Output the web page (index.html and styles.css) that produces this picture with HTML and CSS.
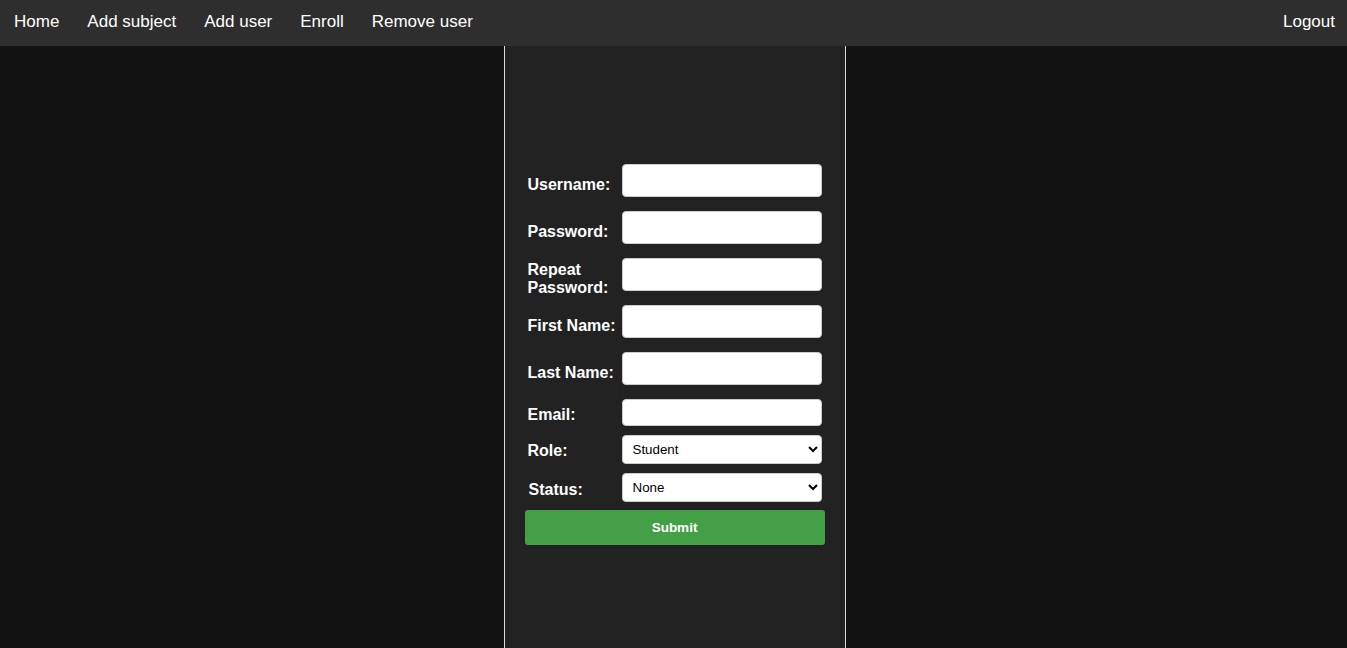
FILE: index.html
```html
<!DOCTYPE html>
<html>
<head>
<meta charset="utf-8">
<link rel="stylesheet" href="styles.css">
</head>
<body>
<nav class="topnav">
  <div class="nav-left">
    <a href="#">Home</a>
    <a href="#">Add subject</a>
    <a href="#">Add user</a>
    <a href="#">Enroll</a>
    <a href="#">Remove user</a>
  </div>
  <a href="#">Logout</a>
</nav>
<main class="page">
  <section class="panel">
    <form class="form">
      <div class="row row-text"><label>Username:</label><input class="field" type="text"></div>
      <div class="row row-text"><label>Password:</label><input class="field" type="password"></div>
      <div class="row row-text"><label>Repeat Password:</label><input class="field" type="password"></div>
      <div class="row row-text"><label>First Name:</label><input class="field" type="text"></div>
      <div class="row row-text"><label>Last Name:</label><input class="field" type="text"></div>
      <div class="row row-email"><label>Email:</label><input class="field email" type="email"></div>
      <div class="row row-select row-role"><label>Role:</label><select class="select"><option>Student</option></select></div>
      <div class="row row-select row-status"><label>Status:</label><select class="select"><option>None</option></select></div>
      <button class="submit" type="button">Submit</button>
    </form>
  </section>
</main>
</body>
</html>
```

FILE: styles.css
```css
html, body {
  margin: 0;
  padding: 0;
  height: 100%;
}
body {
  background: #121212;
  font-family: "Liberation Sans", Arial, sans-serif;
  color: #fff;
  overflow: hidden;
}
.topnav {
  height: 46px;
  background: #2e2e2e;
  display: flex;
  justify-content: space-between;
  align-items: stretch;
}
.nav-left {
  display: flex;
}
.topnav a {
  color: #fff;
  text-decoration: none;
  font-size: 17px;
  line-height: 20px;
  padding: 12px 14px 14px;
}
.topnav > a {
  padding-right: 12px;
}
.page {
  display: flex;
  justify-content: center;
  height: calc(100% - 46px);
}
.panel {
  width: 340px;
  margin-left: 2px;
  background: #222;
  border-left: 1px solid #ddd;
  border-right: 1px solid #ddd;
  padding-top: 118px;
  box-sizing: content-box;
  display: flex;
  justify-content: center;
}
.form {
  width: 300px;
  display: flex;
  flex-direction: column;
}
.row {
  display: flex;
  align-items: center;
}
.row label {
  width: 94px;
  padding-left: 3px;
  font-weight: bold;
  font-size: 16px;
  line-height: 18px;
  box-sizing: content-box;
}
.row-text {
  height: 33px;
  margin-bottom: 14px;
}
.row-text label {
  padding-top: 8px;
}
.row-email {
  height: 27px;
  margin-bottom: 9px;
}
.row-email label {
  padding-top: 4px;
}
.row-role {
  height: 29px;
  margin-bottom: 9px;
}
.row-role label {
  padding-top: 3px;
}
.row-status {
  height: 29px;
  margin-bottom: 8px;
}
.row-status label {
  padding-top: 4px;
  padding-left: 4px;
  width: 93px;
}
.field {
  width: 200px;
  height: 33px;
  box-sizing: border-box;
  border: 1px solid #ccc;
  border-radius: 4px;
  background: #fff;
  padding: 0 8px;
  font-family: "Liberation Sans", Arial, sans-serif;
  font-size: 13.33px;
  margin: 0;
}
.field.email {
  height: 27px;
}
.select {
  width: 200px;
  height: 29px;
  box-sizing: border-box;
  border: 1px solid #ccc;
  border-radius: 4px;
  background: #fff;
  padding: 0 6px;
  font-family: "Liberation Sans", Arial, sans-serif;
  font-size: 13.33px;
  color: #000;
  margin: 0;
}
.submit {
  width: 300px;
  height: 35px;
  background: #43a047;
  border: none;
  border-radius: 3px;
  color: #fff;
  font-family: "Liberation Sans", Arial, sans-serif;
  font-weight: bold;
  font-size: 13.5px;
  cursor: pointer;
  margin: 0;
}
```
